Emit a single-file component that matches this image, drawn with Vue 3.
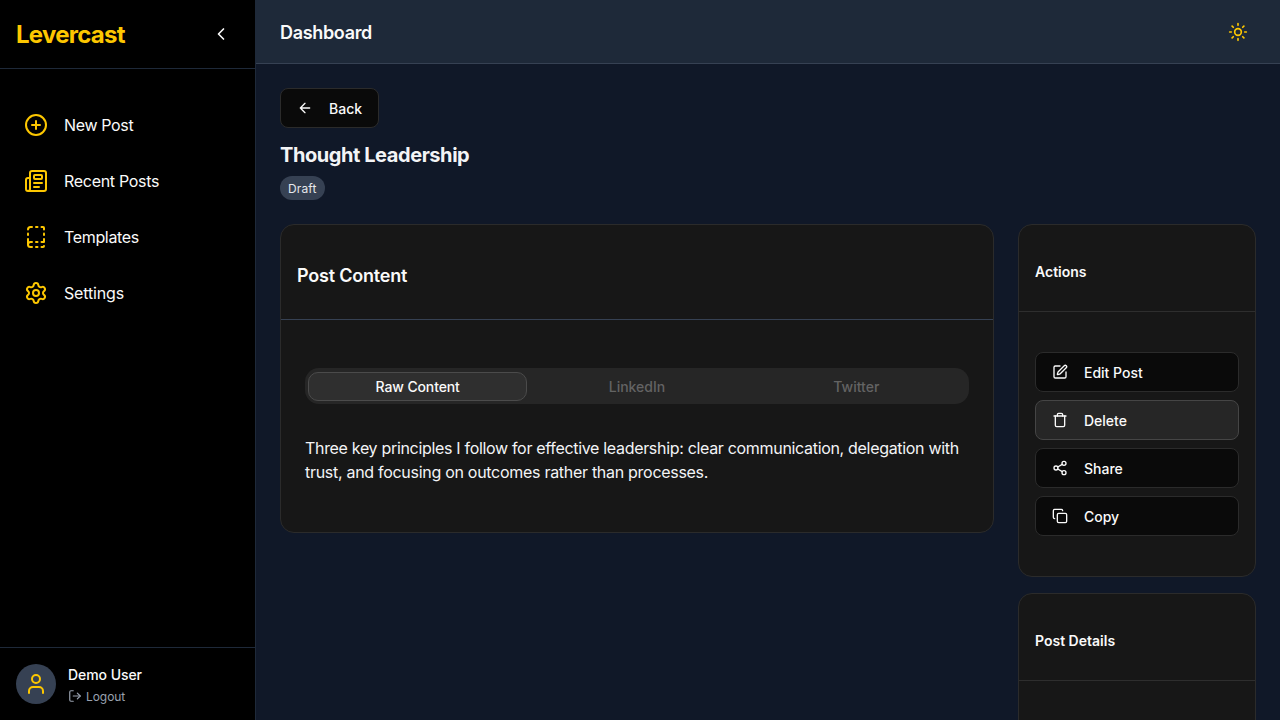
<script setup>
const icons = {
  plus: '<circle cx="12" cy="12" r="10"/><path d="M8 12h8M12 8v8"/>',
  news: '<path d="M15 18h-5M18 14h-8"/><path d="M4 22h16a2 2 0 0 0 2-2V4a2 2 0 0 0-2-2H8a2 2 0 0 0-2 2v16a2 2 0 0 1-4 0v-9a2 2 0 0 1 2-2h2"/><rect width="8" height="4" x="10" y="6" rx="1"/>',
  book: '<path d="M12 17h1.5"/><path d="M12 22h1.5"/><path d="M12 2h1.5"/><path d="M17.5 22H19a1 1 0 0 0 1-1"/><path d="M17.5 2H19a1 1 0 0 1 1 1v1.5"/><path d="M20 14v3h-2.5"/><path d="M20 8.5V10"/><path d="M4 10V8.5"/><path d="M4 19.5V14"/><path d="M4 4.5A2.5 2.5 0 0 1 6.5 2H8"/><path d="M8 22H6.5a1 1 0 0 1 0-5H8"/>',
  gear: '<path d="M9.671 4.136a2.34 2.34 0 0 1 4.659 0 2.34 2.34 0 0 0 3.319 1.915 2.34 2.34 0 0 1 2.33 4.033 2.34 2.34 0 0 0 0 3.831 2.34 2.34 0 0 1-2.33 4.033 2.34 2.34 0 0 0-3.319 1.915 2.34 2.34 0 0 1-4.659 0 2.34 2.34 0 0 0-3.32-1.915 2.34 2.34 0 0 1-2.33-4.033 2.34 2.34 0 0 0 0-3.831A2.34 2.34 0 0 1 6.35 6.051a2.34 2.34 0 0 0 3.319-1.915"/><circle cx="12" cy="12" r="3"/>',
  edit: '<path d="M12 3H5a2 2 0 0 0-2 2v14a2 2 0 0 0 2 2h14a2 2 0 0 0 2-2v-7"/><path d="M18.375 2.625a1 1 0 0 1 3 3l-9.013 9.014a2 2 0 0 1-.853.505l-2.873.84a.5.5 0 0 1-.62-.62l.84-2.873a2 2 0 0 1 .506-.852z"/>',
  trash: '<path d="M3 6h18"/><path d="M19 6v14c0 1-1 2-2 2H7c-1 0-2-1-2-2V6"/><path d="M8 6V4c0-1 1-2 2-2h4c1 0 2 1 2 2v2"/>',
  share: '<circle cx="18" cy="5" r="3"/><circle cx="6" cy="12" r="3"/><circle cx="18" cy="19" r="3"/><path d="M8.59 13.51l6.83 3.98M15.41 6.51l-6.82 3.98"/>',
  copy: '<rect width="14" height="14" x="8" y="8" rx="2"/><path d="M4 16c-1.1 0-2-.9-2-2V4c0-1.1.9-2 2-2h10c1.1 0 2 .9 2 2"/>',
}
const nav = [
  { icon: 'plus', label: 'New Post' },
  { icon: 'news', label: 'Recent Posts' },
  { icon: 'book', label: 'Templates' },
  { icon: 'gear', label: 'Settings' },
]
const tabs = ['Raw Content', 'LinkedIn', 'Twitter']
const actions = [
  { icon: 'edit', label: 'Edit Post' },
  { icon: 'trash', label: 'Delete', danger: true },
  { icon: 'share', label: 'Share' },
  { icon: 'copy', label: 'Copy' },
]
</script>

<template>
  <div class="app">
    <aside class="sidebar">
      <div class="brand">
        <span class="logo">Levercast</span>
        <button class="collapse"><svg class="i20" viewBox="0 0 24 24"><path d="m15 18-6-6 6-6" /></svg></button>
      </div>
      <nav class="nav">
        <a v-for="n in nav" :key="n.label" class="nav-item" :class="n.icon">
          <svg class="i24 gold" viewBox="0 0 24 24" v-html="icons[n.icon]"></svg>
          <span>{{ n.label }}</span>
        </a>
      </nav>
      <div class="user">
        <div class="avatar">
          <svg class="i24 gold" viewBox="0 0 24 24"><path d="M19 21v-2a4 4 0 0 0-4-4H9a4 4 0 0 0-4 4v2" /><circle cx="12" cy="7" r="4" /></svg>
        </div>
        <div class="who">
          <p class="name">Demo User</p>
          <a class="logout">
            <svg class="i14" viewBox="0 0 24 24"><path d="M9 21H5a2 2 0 0 1-2-2V5a2 2 0 0 1 2-2h4" /><path d="m16 17 5-5-5-5" /><path d="M21 12H9" /></svg>
            <span>Logout</span>
          </a>
        </div>
      </div>
    </aside>

    <div class="page">
      <header class="topbar">
        <h1>Dashboard</h1>
        <button class="theme">
          <svg class="i20 gold" viewBox="0 0 24 24"><circle cx="12" cy="12" r="4" /><path d="M12 2v2M12 20v2M4.93 4.93l1.41 1.41M17.66 17.66l1.41 1.41M2 12h2M20 12h2M6.34 17.66l-1.41 1.41M19.07 4.93l-1.41 1.41" /></svg>
        </button>
      </header>

      <main class="content">
        <button class="btn back">
          <svg class="i16" viewBox="0 0 24 24"><path d="m12 19-7-7 7-7M19 12H5" /></svg>
          <span>Back</span>
        </button>
        <h2 class="title">Thought Leadership</h2>
        <span class="badge">Draft</span>

        <div class="grid">
          <section class="card">
            <div class="card-head blue"><h3 class="large">Post Content</h3></div>
            <div class="post">
              <div class="tabs">
                <button v-for="(t, i) in tabs" :key="t" class="tab" :class="{ active: i === 0 }">{{ t }}</button>
              </div>
              <p class="text"><span class="lead">Three key principles I follow for effective leadership: clear communication, delegation with </span>trust, and focusing on outcomes rather than processes.</p>
            </div>
          </section>
          <div class="side">
            <section class="card">
              <div class="card-head small"><h3>Actions</h3></div>
              <div class="actions">
                <button v-for="a in actions" :key="a.label" class="btn" :class="{ danger: a.danger }">
                  <svg class="i16" viewBox="0 0 24 24" v-html="icons[a.icon]"></svg>
                  <span>{{ a.label }}</span>
                </button>
              </div>
            </section>
            <section class="card details">
              <div class="card-head small"><h3>Post Details</h3></div>
            </section>
          </div>
        </div>
      </main>
    </div>
  </div>
</template>

<style>
html, body { margin: 0; overflow: hidden; background: #101828; }
</style>

<style scoped>
* { box-sizing: border-box; margin: 0; }
.app { display: flex; width: 100%; height: 100vh; overflow: hidden; font-family: Inter, "Liberation Sans", sans-serif; font-size: 16px; line-height: 24px; color: #fafafa; background: #101828; }
button { font: inherit; color: inherit; background: none; border: 0; padding: 0; }
svg { display: block; flex: none; fill: none; stroke: currentColor; stroke-width: 2; stroke-linecap: round; stroke-linejoin: round; }
.i14 { width: 14px; height: 14px; }
.i16 { width: 16px; height: 16px; }
.i20 { width: 20px; height: 20px; }
.i24 { width: 24px; height: 24px; }
.gold { color: #fdc700; }

.sidebar { width: 256px; flex: none; display: flex; flex-direction: column; background: #000; border-right: 1px solid #1e2939; }
.brand { height: 69px; padding: 0 24px 0 16px; display: flex; align-items: center; justify-content: space-between; border-bottom: 1px solid #1e2939; }
.logo { padding-top: 2px; font-size: 24px; line-height: 32px; font-weight: 700; color: #fdc700; letter-spacing: -0.74px; }
.nav { flex: 1; padding: 32px 8px; display: flex; flex-direction: column; gap: 8px; }
.nav-item { height: 48px; padding: 0 16px; display: flex; align-items: center; gap: 16px; letter-spacing: -0.34px; }
.nav-item.news { letter-spacing: -0.3px; }
.nav-item.gear { letter-spacing: -0.15px; }
.user { height: 73px; padding: 0 16px; display: flex; align-items: center; gap: 12px; border-top: 1px solid #1e2939; }
.avatar { width: 40px; height: 40px; border-radius: 50%; background: #364153; display: grid; place-items: center; }
.name { padding-top: 1px; font-size: 14px; line-height: 20px; font-weight: 500; letter-spacing: -0.06px; }
.logout { display: flex; align-items: center; gap: 4px; margin-top: 3px; font-size: 12px; line-height: 16px; color: #99a1af; }
.logout span { padding-top: 2px; line-height: 14px; letter-spacing: -0.06px; }

.page { flex: 1; min-width: 0; display: flex; flex-direction: column; }
.topbar { height: 64px; flex: none; padding: 0 32px 0 24px; display: flex; align-items: center; justify-content: space-between; background: #1e2939; border-bottom: 1px solid #364153; }
.topbar h1 { padding-top: 2px; font-size: 18px; line-height: 28px; font-weight: 600; letter-spacing: -0.33px; }
.content { flex: 1; min-height: 0; padding: 24px; overflow: hidden; }
.btn { height: 40px; display: flex; align-items: center; gap: 16px; padding: 0 16px; background: #0a0a0a; border: 1px solid #2b2b2b; border-radius: 8px; font-size: 14px; line-height: 20px; font-weight: 500; }
.btn span { padding-top: 2px; }
.btn.danger { background: #262626; border-color: #454545; }
.title { margin-top: 13px; font-size: 20px; line-height: 28px; font-weight: 700; color: #f3f4f6; letter-spacing: -0.43px; }
.badge { display: flex; width: fit-content; height: 24px; align-items: center; margin-top: 7px; padding: 1px 8px 0; border-radius: 12px; background: #364153; color: #e5e7eb; font-size: 12px; line-height: 16px; letter-spacing: 0.15px; }
.grid { margin-top: 24px; display: grid; grid-template-columns: 3fr 1fr; gap: 24px; align-items: start; }
.card { background: #171717; border: 1px solid #2b2b2b; border-radius: 14px; }
.card-head { height: 95px; padding: 8px 16px 0; display: flex; align-items: center; border-bottom: 1px solid #2e2e2e; }
.card-head.blue { border-color: #364153; }
.card-head.small { height: 87px; padding-top: 7px; }
h3 { font-size: 14px; line-height: 20px; font-weight: 600; }
h3.large { font-size: 18px; line-height: 28px; letter-spacing: -0.2px; }
.post { padding: 48px 24px; }
.tabs { height: 36px; padding: 3px; display: grid; grid-template-columns: repeat(3, 1fr); align-items: center; background: #262626; border-radius: 14px; }
.tab { height: 29px; padding-top: 2px; border: 1px solid transparent; border-radius: 10px; font-size: 14px; line-height: 20px; font-weight: 500; color: #636363; }
.tab.active { color: #fafafa; background: #2f2f2f; border-color: #4b4b4b; letter-spacing: -0.12px; }
.text { margin-top: 32px; color: #f3f4f6; letter-spacing: -0.29px; }
.lead { letter-spacing: -0.317px; }
.side { display: flex; flex-direction: column; gap: 16px; }
.actions { padding: 40px 16px; display: flex; flex-direction: column; gap: 8px; }
.details { height: 300px; }
</style>
